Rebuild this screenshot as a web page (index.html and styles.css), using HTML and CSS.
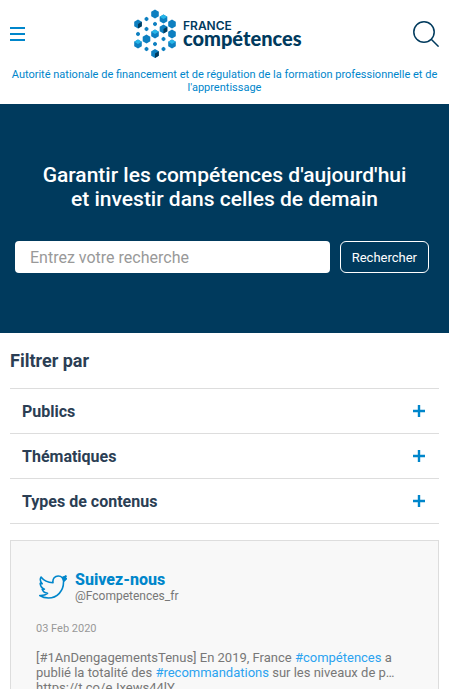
FILE: index.html
```html
<!DOCTYPE html>
<html lang="fr">
  <head>
    <meta charset="utf-8" />
    <meta name="viewport" content="width=device-width, initial-scale=1" />
    <title>France compétences</title>
    <link rel="stylesheet" href="styles.css" />
  </head>
  <body>
    <header class="header">
      <div class="header-bar">
        <button class="icon-btn" type="button" aria-label="Menu">
          <svg width="15" height="14" viewBox="0 0 15 14" fill="#0086cb">
            <path d="M0 0h15v2H0zM0 6h15v2H0zM0 12h15v2H0z" />
          </svg>
        </button>
        <a class="logo" href="#" aria-label="France compétences">
          <svg width="184" height="50" viewBox="0 0 184 50">
            <defs>
              <path id="big" d="M0-4.4 3.8-2.2v4.4L0 4.4-3.8 2.2v-4.4z" />
              <path id="small" d="M0-2.2 1.9-1.1v2.2L0 2.2-1.9 1.1v-2.2z" />
              <path id="top" d="M0-4.4 3.8-2.2 0 0-3.8-2.2z" />
              <path id="side" d="M3.8-2.2v4.4L0 4.4V0z" />
            </defs>
            <g fill="#0d7fc0">
              <use href="#big" x="22" y="5" />
              <use href="#big" x="30.5" y="10" />
              <use href="#small" x="13.5" y="10" />
              <use href="#big" x="5" y="15" />
              <use href="#small" x="22" y="15" />
              <use href="#big" x="39" y="15" />
              <use href="#big" x="30.5" y="20" />
              <use href="#small" x="13.5" y="20" />
              <use href="#small" x="5" y="25" />
              <use href="#big" x="22" y="25" />
              <use href="#big" x="39" y="25" />
              <use href="#big" x="13.5" y="30" />
              <use href="#small" x="30.5" y="30" />
              <use href="#big" x="5" y="35" />
              <use href="#small" x="22" y="35" />
              <use href="#big" x="39" y="35" />
              <use href="#small" x="13.5" y="40" />
              <use href="#small" x="30.5" y="40" />
              <use href="#big" x="22" y="44.5" />
            </g>
            <g fill="#27b5e8">
              <use href="#top" x="30.5" y="10" />
              <use href="#top" x="22" y="25" />
              <use href="#top" x="5" y="35" />
              <use href="#top" x="39" y="35" />
            </g>
            <g fill="#003a5d">
              <use href="#side" x="5" y="15" />
              <use href="#side" x="30.5" y="20" />
              <use href="#side" x="22" y="44.5" />
            </g>
            <text class="logo-top" x="50" y="21">FRANCE</text>
            <text class="logo-name" x="50" y="37">compétences</text>
          </svg>
        </a>
        <button class="icon-btn" type="button" aria-label="Rechercher">
          <svg width="26" height="26" viewBox="0 0 26 26" fill="none" stroke="#003a5d" stroke-width="1.5">
            <circle cx="11" cy="11" r="10.2" />
            <path d="M18.2 18.2 25.6 25.6" />
          </svg>
        </button>
      </div>
      <p class="tagline">
        Autorité nationale de financement et de régulation de la formation
        professionnelle et de l'apprentissage
      </p>
    </header>

    <main>
      <section class="hero">
        <h1 class="hero-title">
          Garantir les compétences d'aujourd'hui<br />et investir dans celles de demain
        </h1>
        <form class="search">
          <input class="search-input" type="text" placeholder="Entrez votre recherche" aria-label="Entrez votre recherche" />
          <button class="search-btn" type="button">Rechercher</button>
        </form>
      </section>

      <section class="filters">
        <h2 class="filters-title">Filtrer par</h2>
        <button class="filter" type="button">
          Publics
          <svg class="plus" width="12" height="12" viewBox="0 0 12 12"><path d="M4.8 0h2.4v4.8H12v2.4H7.2V12H4.8V7.2H0V4.8h4.8z" /></svg>
        </button>
        <button class="filter" type="button">
          Thématiques
          <svg class="plus" width="12" height="12" viewBox="0 0 12 12"><path d="M4.8 0h2.4v4.8H12v2.4H7.2V12H4.8V7.2H0V4.8h4.8z" /></svg>
        </button>
        <button class="filter" type="button">
          Types de contenus
          <svg class="plus" width="12" height="12" viewBox="0 0 12 12"><path d="M4.8 0h2.4v4.8H12v2.4H7.2V12H4.8V7.2H0V4.8h4.8z" /></svg>
        </button>
      </section>

      <section class="twitter">
        <div class="twitter-head">
          <svg width="28" height="24" viewBox="0 0 28 24" fill="none" stroke="#0086cb" stroke-width="1.6" stroke-linejoin="round">
            <path d="M2 2c2.500 3.300 6.500 5.500 12 5.800C13.300 3.500 16 1 19.200 1c1.800 0 3.200.7 4.200 1.700L26.800 1.200 26 3.500l1.200.2-2.700 3C24.800 16 18 23 9.500 23 6 23 3 22 .8 20.500c3.200.2 5.800-.5 7.700-2.200-2.800-.3-4.500-1.700-5.300-4h2.200C2.800 13 1.200 11 1.200 8.200l2 .6C1.200 6.800.9 4.300 2 2z" />
            <path d="M23.400 2.700 26.800 1.200 26 3.500l1.200.2-2.700 2z" fill="#0086cb" />
          </svg>
          <div>
            <h2 class="twitter-title">Suivez-nous</h2>
            <p class="twitter-name">@Fcompetences_fr</p>
          </div>
        </div>
        <p class="tweet-date">03 Feb 2020</p>
        <p class="tweet">
          [#1AnDengagementsTenus] En 2019, France <a href="#">#compétences</a> a
          publié la totalité des <a href="#">#recommandations</a> sur les niveaux de p…
          https://t.co/eJxews44lY
        </p>
      </section>
    </main>
  </body>
</html>
```
FILE: styles.css
```css
* {
  box-sizing: border-box;
}
body {
  margin: 0;
  font-family: Roboto, sans-serif;
  color: #2b3e54;
  background: #fff;
}
h1,
h2,
p {
  margin: 0;
}
button,
input {
  font-family: inherit;
}
svg {
  display: block;
}
a {
  color: #2ba3f0;
  text-decoration: none;
}

.header {
  padding: 9px 10px 10px;
}
.header-bar {
  display: grid;
  grid-template-columns: 1fr auto 1fr;
  align-items: center;
}
.icon-btn {
  justify-self: start;
  padding: 0;
  border: 0;
  background: none;
  cursor: pointer;
}
.icon-btn:last-child {
  justify-self: end;
}
.logo-top {
  font: 600 12px Inter, sans-serif;
  fill: #003a5d;
}
.logo-name {
  font: 900 20px Lato, sans-serif;
  fill: #003a5d;
}
.tagline {
  padding-top: 9px;
  font-size: 11px;
  line-height: 13px;
  text-align: center;
  color: #0086cb;
}

.hero {
  padding: 59px 20px 60px 15px;
  background: #003a5d;
  color: #fff;
}
.hero-title {
  padding-left: 5px;
  font-size: 21px;
  font-weight: 500;
  line-height: 24px;
  text-align: center;
}
.search {
  display: flex;
  gap: 10px;
  padding-top: 30px;
}
.search-input {
  flex: 1;
  min-width: 0;
  height: 32px;
  padding: 0 15px;
  border: 0;
  border-radius: 4px;
  font-size: 16px;
}
.search-input::placeholder {
  color: #999;
}
.search-btn {
  height: 32px;
  padding: 0 11px;
  border: 1px solid #fff;
  border-radius: 6px;
  background: none;
  color: #fff;
  font-size: 13px;
}

.filters {
  padding: 16px 10px;
}
.filters-title {
  padding-bottom: 15px;
  font-size: 18px;
  line-height: 24px;
}
.filter {
  display: flex;
  justify-content: space-between;
  align-items: center;
  width: 100%;
  height: 45px;
  padding: 0 14px 0 12px;
  border: 0;
  border-top: 1px solid #ddd;
  background: none;
  color: #2b3e54;
  font-size: 16px;
  font-weight: 700;
}
.filter:last-child {
  height: 46px;
  border-bottom: 1px solid #ddd;
}
.plus {
  fill: #0086cb;
}

.twitter {
  margin: 0 10px;
  padding: 30px 25px;
  border: 1px solid #ddd;
  background: #f8f8f8;
  color: #777;
}
.twitter-head {
  display: flex;
  align-items: center;
  gap: 8px;
  padding-left: 3px;
}
.twitter-title {
  font-size: 16px;
  font-weight: 800;
  line-height: 18px;
  color: #0086cb;
}
.twitter-name {
  font-size: 12px;
  line-height: 14px;
}
.tweet-date {
  padding: 19px 0 14px;
  font-size: 11px;
  line-height: 14px;
  color: #999;
}
.tweet {
  font-size: 13px;
  line-height: 15px;
}
```
